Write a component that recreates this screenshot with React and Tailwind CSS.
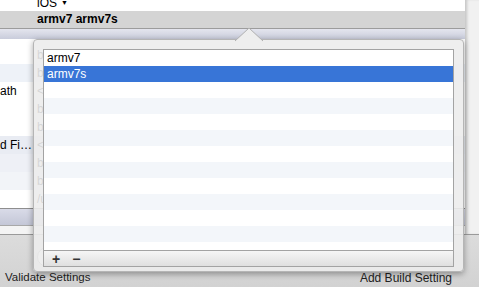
import React from "react";

const under = [
  { label: "", val: "build/Release", bg: "bg-white" },
  { label: "", val: "build/Release", bg: "bg-[#eef2f8]" },
  { label: "ath", val: "<Multiple values>", bg: "bg-white" },
  { label: "", val: "build/Debug", bg: "bg-white" },
  { label: "", val: "build/Debug", bg: "bg-white" },
  { label: "d Fi…", val: "<Multiple values>", bg: "bg-[#e9ecf3]" },
  { label: "", val: "build/Release", bg: "bg-[#eef0f6]" },
  { label: "", val: "build/Release", bg: "bg-[#f2f4f8]" },
  { label: "", val: "/usr/local", bg: "bg-white" },
];

const listRows = Array.from({ length: 13 }, (_, i) => i);

export default function App() {
  return (
    <div
      className="relative w-[479px] h-[287px] overflow-hidden bg-white text-[12px] text-black"
      style={{ fontFamily: '"Liberation Sans", Arial, sans-serif' }}
    >
      {/* underlying window content */}
      <div className="flex h-[234px]">
        <div className="flex-1 flex flex-col">
          <div className="h-[11px] overflow-hidden pl-[37px]">
            <div className="-mt-[5px] leading-[16px] flex items-center gap-[4px]">
              <span>iOS</span>
              <span className="text-[7px]">▼</span>
            </div>
          </div>
          <div className="h-[17px] bg-[#d4d4d4] pl-[37px] leading-[17px] font-bold">armv7 armv7s</div>
          <div className="h-[1px] bg-[#9c9c9c]" />
          <div className="h-[10px] bg-gradient-to-b from-[#e4e5ee] to-[#c9ccdb]" />
          <div className="h-[7px] bg-white" />
          {under.map((r, i) => (
            <div key={i} className={`h-[18px] flex items-center ${r.bg}`}>
              <div className="w-[37px] overflow-hidden whitespace-nowrap">{r.label}</div>
              <div className="whitespace-nowrap">{r.val}</div>
            </div>
          ))}
          <div className="h-[1px] bg-[#8e8e8e]" />
          <div className="h-[16px] bg-gradient-to-b from-[#d9dbe8] to-[#c4c7d7]" />
          <div className="h-[1px] bg-[#a8a8a8]" />
          <div className="flex-1 bg-[#f4f4f4]" />
        </div>
        <div className="w-[14px] bg-[#f1f1f1] shadow-[inset_3px_0_3px_-1px_rgba(0,0,0,0.18)]" />
      </div>
      <div className="h-[53px] border-t border-[#9a9a9a] bg-gradient-to-b from-[#dcdcdc] to-[#d2d2d2] flex flex-col">
        <div className="h-[34px] pt-[12px] pl-[37px]">
          <div className="w-[160px] h-[20px] rounded-full border border-[#9a9a9a] bg-white" />
        </div>
        <div className="flex-1 flex items-center justify-between pl-[5px] pr-[27px] text-[#222]">
          <span className="text-[11.5px]">Validate Settings</span>
          <span className="text-[12px]">Add Build Setting</span>
        </div>
      </div>

      {/* popover */}
      <div className="absolute left-[33px] top-[39px] w-[431px] h-[233px] rounded-[4px] border border-[#b5b5b5] bg-[#ececec]/90 shadow-[0_2px_6px_rgba(0,0,0,0.35)] pt-[9px] pl-[9px] pr-[9px] pb-[4px] flex flex-col">
        <svg
          className="absolute left-[201px] -top-[13px]"
          width="28"
          height="15"
          viewBox="0 0 28 15"
        >
          <polygon points="0,14 14,1 28,14" fill="#eeeeee" />
          <polyline points="0,14 14,1 28,14" fill="none" stroke="#b0b0b0" strokeWidth="1" />
        </svg>
        <div className="flex-1 flex flex-col border border-[#a3a3a3] bg-white overflow-hidden">
          <div className="flex-1 overflow-hidden">
            <div className="h-[16px] leading-[16px] pl-[3px] bg-white">armv7</div>
            <div className="h-[16px] leading-[16px] pl-[3px] bg-[#3875d7] text-white">armv7s</div>
            {listRows.map((i) => (
              <div key={i} className={`h-[16px] ${i % 2 === 0 ? "bg-white" : "bg-[#f3f6fa]"}`} />
            ))}
          </div>
          <div className="h-[16px] border-t border-[#a3a3a3] bg-gradient-to-b from-[#f6f6f6] to-[#dfdfdf] flex items-center gap-[12px] pl-[8px] text-[#333]">
            <span className="text-[14px] leading-[14px] font-bold">+</span>
            <span className="text-[14px] leading-[14px] font-bold">−</span>
          </div>
        </div>
      </div>
    </div>
  );
}
